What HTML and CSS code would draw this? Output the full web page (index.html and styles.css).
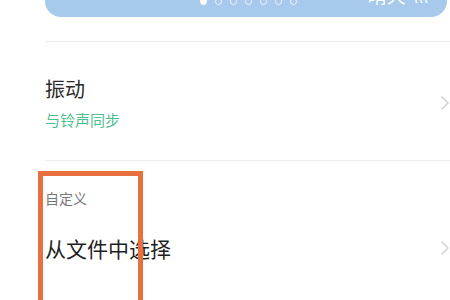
FILE: index.html
```html
<!DOCTYPE html>
<html lang="zh-CN">

<head>
    <meta charset="UTF-8">
    <meta name="viewport" content="width=device-width, initial-scale=1.0">
    <title>铃声设置</title>
    <link rel="stylesheet" href="styles.css">
</head>

<body>
    <div class="page">
        <div class="weather-card">
            <div class="dots">
                <span class="dot active"></span>
                <span class="dot"></span>
                <span class="dot"></span>
                <span class="dot"></span>
                <span class="dot"></span>
                <span class="dot"></span>
                <span class="dot"></span>
            </div>
            <div class="weather">晴天 <span class="bars">lll</span></div>
        </div>

        <div class="setting-row vibrate-row">
            <div class="row-text">
                <div class="row-title">振动</div>
                <div class="row-sub">与铃声同步</div>
            </div>
            <svg class="chevron" viewBox="0 0 10 16" width="10" height="16">
                <path d="M1.5 1.5 L8 8 L1.5 14.5" fill="none" stroke="#d4d4d4" stroke-width="1.6" />
            </svg>
        </div>

        <div class="custom-section">
            <div class="section-label">自定义</div>
            <div class="setting-row file-row">
                <div class="row-title big">从文件中选择</div>
                <svg class="chevron" viewBox="0 0 10 16" width="10" height="16">
                    <path d="M1.5 1.5 L8 8 L1.5 14.5" fill="none" stroke="#d4d4d4" stroke-width="1.6" />
                </svg>
            </div>
            <!-- annotation box drawn over the screenshot -->
            <div class="highlight"></div>
        </div>
    </div>
</body>

</html>
```

FILE: styles.css
```css
body {
    margin: 0;
    background-color: #ffffff;
    font-family: "Noto Sans CJK SC", "Noto Sans", sans-serif;
    color: #333;
}

.page {
    display: flow-root;
    padding-left: 45px;
    width: 450px;
    height: 300px;
    box-sizing: border-box;
    overflow: hidden;
}

.weather-card {
    height: 60px;
    margin-top: -43px;
    margin-right: 3px;
    background-color: #a7c9ec;
    border-radius: 16px;
    display: flex;
    align-items: flex-end;
    justify-content: space-between;
    padding: 0 18px 10px 155px;
    box-sizing: border-box;
    margin-bottom: 24px;
}

.dots {
    display: flex;
    gap: 8px;
    margin-bottom: 2px;
}

.dot {
    width: 5px;
    height: 5px;
    border: 1px solid rgba(255, 255, 255, 0.75);
    border-radius: 50%;
}

.dot.active {
    background-color: #ffffff;
    border-color: #ffffff;
}

.weather {
    color: #ffffff;
    font-size: 19px;
    line-height: 20px;
    margin-bottom: 0;
}

.bars {
    font-size: 14px;
    letter-spacing: 1px;
    margin-left: 4px;
}

.setting-row {
    display: flex;
    align-items: center;
    justify-content: space-between;
    border-top: 1px solid #ececec;
    padding-right: 2px;
}

.vibrate-row {
    padding-top: 34px;
    padding-bottom: 30px;
    border-bottom: 1px solid #ececec;
}

.row-title {
    font-size: 20px;
    line-height: 26px;
    color: #2a2a2a;
}

.row-title.big {
    font-size: 21px;
    color: #1f1f1f;
}

.row-sub {
    font-size: 15px;
    line-height: 20px;
    color: #4dbf8c;
    margin-top: 8px;
}

.chevron {
    margin-right: -2px;
}

.custom-section {
    position: relative;
}

.section-label {
    font-size: 14px;
    line-height: 18px;
    color: #777;
    padding-top: 28px;
}

.file-row {
    border-top: none;
    padding-top: 28px;
}

.highlight {
    position: absolute;
    left: -7px;
    top: 10px;
    width: 95px;
    height: 160px;
    border: 5px solid #e8703f;
}
```
